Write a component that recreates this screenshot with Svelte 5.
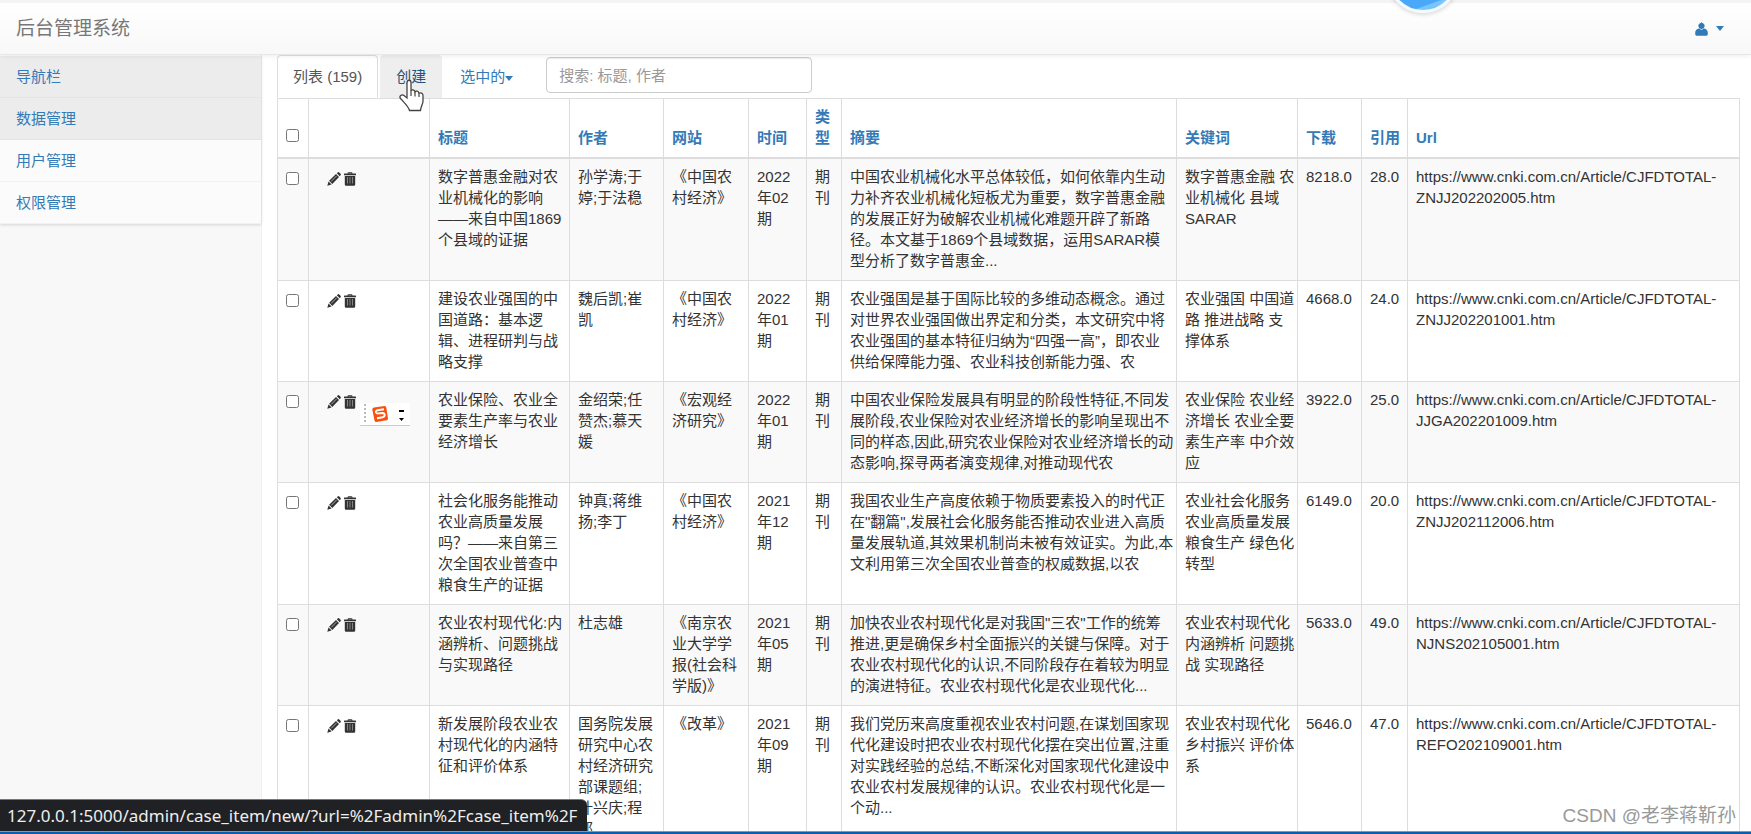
<script lang='ts'>

    const menu = [
        { name: '导航栏', active: true },
        { name: '数据管理', active: true },
        { name: '用户管理', active: false },
        { name: '权限管理', active: false },
    ];

    const columns = [
        { key: 'title', label: '标题' },
        { key: 'author', label: '作者' },
        { key: 'site', label: '网站' },
        { key: 'time', label: '时间' },
        { key: 'type', label: '类型' },
        { key: 'summary', label: '摘要' },
        { key: 'keyword', label: '关键词' },
        { key: 'download', label: '下载' },
        { key: 'cite', label: '引用' },
        { key: 'url', label: 'Url' },
    ];

    const base = 'https://www.cnki.com.cn/Article/CJFDTOTAL-';

    const rows: Record<string, string>[] = [
        {
            title: '数字普惠金融对农业机械化的影响——来自中国1869个县域的证据',
            author: '孙学涛;于婷;于法稳',
            site: '《中国农村经济》',
            time: '2022年02期',
            type: '期刊',
            summary: '中国农业机械化水平总体较低，如何依靠内生动力补齐农业机械化短板尤为重要，数字普惠金融的发展正好为破解农业机械化难题开辟了新路径。本文基于1869个县域数据，运用SARAR模型分析了数字普惠金...',
            keyword: '数字普惠金融 农业机械化 县域 SARAR',
            download: '8218.0',
            cite: '28.0',
            url: base + 'ZNJJ202202005.htm',
        },
        {
            title: '建设农业强国的中国道路：基本逻辑、进程研判与战略支撑',
            author: '魏后凯;崔凯',
            site: '《中国农村经济》',
            time: '2022年01期',
            type: '期刊',
            summary: '农业强国是基于国际比较的多维动态概念。通过对世界农业强国做出界定和分类，本文研究中将农业强国的基本特征归纳为“四强一高”，即农业供给保障能力强、农业科技创新能力强、农',
            keyword: '农业强国 中国道路 推进战略 支撑体系',
            download: '4668.0',
            cite: '24.0',
            url: base + 'ZNJJ202201001.htm',
        },
        {
            title: '农业保险、农业全要素生产率与农业经济增长',
            author: '金绍荣;任赞杰;慕天媛',
            site: '《宏观经济研究》',
            time: '2022年01期',
            type: '期刊',
            summary: '中国农业保险发展具有明显的阶段性特征,不同发展阶段,农业保险对农业经济增长的影响呈现出不同的样态,因此,研究农业保险对农业经济增长的动态影响,探寻两者演变规律,对推动现代农',
            keyword: '农业保险 农业经济增长 农业全要素生产率 中介效应',
            download: '3922.0',
            cite: '25.0',
            url: base + 'JJGA202201009.htm',
        },
        {
            title: '社会化服务能推动农业高质量发展吗？——来自第三次全国农业普查中粮食生产的证据',
            author: '钟真;蒋维扬;李丁',
            site: '《中国农村经济》',
            time: '2021年12期',
            type: '期刊',
            summary: '我国农业生产高度依赖于物质要素投入的时代正在"翻篇",发展社会化服务能否推动农业进入高质量发展轨道,其效果机制尚未被有效证实。为此,本文利用第三次全国农业普查的权威数据,以农',
            keyword: '农业社会化服务 农业高质量发展 粮食生产 绿色化转型',
            download: '6149.0',
            cite: '20.0',
            url: base + 'ZNJJ202112006.htm',
        },
        {
            title: '农业农村现代化:内涵辨析、问题挑战与实现路径',
            author: '杜志雄',
            site: '《南京农业大学学报(社会科学版)》',
            time: '2021年05期',
            type: '期刊',
            summary: '加快农业农村现代化是对我国"三农"工作的统筹推进,更是确保乡村全面振兴的关键与保障。对于农业农村现代化的认识,不同阶段存在着较为明显的演进特征。农业农村现代化是农业现代化...',
            keyword: '农业农村现代化 内涵辨析 问题挑战 实现路径',
            download: '5633.0',
            cite: '49.0',
            url: base + 'NJNS202105001.htm',
        },
        {
            title: '新发展阶段农业农村现代化的内涵特征和评价体系',
            author: '国务院发展研究中心农村经济研究部课题组;叶兴庆;程郁',
            site: '《改革》',
            time: '2021年09期',
            type: '期刊',
            summary: '我们党历来高度重视农业农村问题,在谋划国家现代化建设时把农业农村现代化摆在突出位置,注重对实践经验的总结,不断深化对国家现代化建设中农业农村发展规律的认识。农业农村现代化是一个动...',
            keyword: '农业农村现代化 乡村振兴 评价体系',
            download: '5646.0',
            cite: '47.0',
            url: base + 'REFO202109001.htm',
        },
    ];

    let search = '';
    let selected = rows.map(() => false);

    $: allSelected = selected.every(Boolean);

    const toggleAll = () => {
        const next = !allSelected;
        selected = selected.map(() => next);
    }

</script>

<div class='page'>

    <header class='navbar'>
        <a class='brand' href='#home'>后台管理系统</a>
        <button class='user' aria-label='账户'>
            <svg width='13' height='14' viewBox='0 0 13 14'>
                <path d='M6.500 0 7.300.900C9 1.300 9.800 2.500 9.600 3.900 9.500 5 8.900 5.900 8.200 6.400H9C11.500 6.600 12.800 8.500 12.800 11V12.300Q12.800 13.700 11.400 13.700H1.600Q.200 13.700.200 12.300V11C.200 8.500 1.500 6.600 4 6.400H4.800C4.100 5.900 3.500 5 3.400 3.900 3.200 2.500 4 1.300 5.700.900Z'/>
                <path d='M4.800 6.300 6.500 8 8.200 6.300' fill='none' stroke='#fbfbfb' stroke-width='.8'/>
            </svg>
            <span class='caret'></span>
        </button>
    </header>

    <div class='body'>

        <nav class='sidebar'>
            <ul class='menu'>
                {#each menu as item}
                    <li><a href='#menu' class:active={item.active}>{item.name}</a></li>
                {/each}
            </ul>
        </nav>

        <main class='content'>

            <div class='tabs'>
                <a class='tab current' href='#list'>列表 (159)</a>
                <a class='tab hover' href='#new'>
                    创建
                    <svg class='cursor' width='25' height='33' viewBox='0 0 25 33'>
                        <path d='M8 19V3.500C8 .500 12 .500 12 3.500V12C12.500 10.500 15.500 10.500 16 12.800 17 11.500 19.500 12 20 14.300 21.500 13.300 24 14 24 16.500V22C24 25 22 27 21.500 31.500H10.500C9.500 27.500 5 23.500 1.500 19.500-.500 17 3 14.800 5 16.600Z' fill='#fff' stroke='#444' stroke-width='1.300'/>
                        <path d='M12 12V17M16 13V17.500M20 14.500V18' fill='none' stroke='#444' stroke-width='1.200'/>
                    </svg>
                </a>
                <button class='tab'>选中的<span class='caret'></span></button>
                <input class='search' type='text' aria-label='搜索' placeholder='搜索: 标题, 作者' bind:value={search}/>
            </div>

            <table>
                <colgroup>
                    <col class='w-check'/>
                    <col class='w-action'/>
                    {#each columns as column}
                        <col class='w-{column.key}'/>
                    {/each}
                </colgroup>
                <thead>
                    <tr>
                        <th class='check'><input type='checkbox' aria-label='全选' checked={allSelected} on:change={toggleAll}/></th>
                        <th></th>
                        {#each columns as column}
                            <th class={column.key}><a href='#sort'>{column.label}</a></th>
                        {/each}
                    </tr>
                </thead>
                <tbody>
                    {#each rows as row, i}
                        <tr>
                            <td class='check'><input type='checkbox' aria-label='选择' bind:checked={selected[i]}/></td>
                            <td>
                                <div class='actions'>
                                    <button aria-label='编辑'>
                                        <svg width='14' height='14' viewBox='0 0 14 14'>
                                            <path d='M9.800 1.200 10.700.400Q11.500-.200 12.300.500L13.500 1.700Q14.200 2.500 13.600 3.300L12.800 4.200ZM9 2 12 5 5.300 11.900 2.100 8.700ZM1.500 9.400 4.600 12.500.300 13.700Z'/>
                                            <path d='M4.200 9.400 9.700 3.800' stroke='#f9f9f9' stroke-width='.6'/>
                                        </svg>
                                    </button>
                                    <button aria-label='删除'>
                                        <svg width='14' height='14' viewBox='0 0 14 14'>
                                            <path d='M4.500 1.500Q4.500.300 5.700.300H8.300Q9.500.300 9.500 1.500H12.500Q13 1.500 13 2V3.300H1V2Q1 1.500 1.500 1.500ZM5.500 1.500H8.500V1.200H5.500ZM1.800 4H12.200V12.500Q12.200 13.800 11 13.800H3Q1.800 13.800 1.800 12.500Z'/>
                                            <path d='M4.500 5V11.500M7 5V11.500M9.500 5V11.500' stroke='#999' stroke-width='.8'/>
                                        </svg>
                                    </button>
                                </div>
                            </td>
                            {#each columns as column}
                                <td class={column.key}>{row[column.key]}</td>
                            {/each}
                        </tr>
                    {/each}
                </tbody>
            </table>

        </main>

    </div>

    <div class='bubble'></div>

    <div class='ime'>
        <svg width='50' height='22' viewBox='0 0 50 22'>
            <path d='M5 1V21' stroke='#bbb' stroke-width='2' stroke-dasharray='2 2'/>
            <path d='M14 4.500 24.500 3Q26 3 26.300 4.500L28 15.500Q28 17 26.700 17.300L16.500 19Q14.800 19 14.500 17.500L12.300 6.500Q12.300 5 14 4.500Z' fill='#f9500f'/>
            <path d='M24 6.300 17.500 7.200Q15.500 7.800 16 9.300 16.500 10.600 18.500 10.400L22.500 10Q24.500 10 24.700 11.800 24.700 13.800 22.700 14.300L17 15.300' fill='none' stroke='#fff' stroke-width='1.900'/>
            <path d='M39 7H44V9H39ZM39 15H44L41.500 18Z' fill='#000'/>
        </svg>
    </div>

    <div class='watermark'>CSDN @老李蒋靳孙</div>
    <div class='status'>127.0.0.1:5000/admin/case_item/new/?url=%2Fadmin%2Fcase_item%2F</div>
    <div class='taskbar'></div>

</div>

<style>

    :global(body) {
        overflow: hidden;
    }

    .page {
        position: relative;
        display: flex;
        flex-direction: column;
        height: 100vh;
        overflow: hidden;
        box-sizing: border-box;
        background-color: #fff;
        color: #333;
        font-family: 'Liberation Sans', 'Noto Sans CJK SC', sans-serif;
        font-size: 15px;
        line-height: 21px;
    }

    a {
        color: #337ab7;
        text-decoration: none;
    }

    button {
        border: 0;
        padding: 0;
        background: none;
        font: inherit;
        color: #337ab7;
        cursor: pointer;
    }

    svg {
        display: block;
    }

    .navbar {
        position: relative;
        z-index: 1;
        flex: none;
        display: flex;
        align-items: center;
        justify-content: space-between;
        height: 51px;
        padding: 0 27px 0 16px;
        border-top: 3px solid #f4f4f4;
        border-bottom: 1px solid #e7e7e7;
        background: linear-gradient(#fff, #f8f8f8);
        box-shadow: 0 1px 5px rgba(0, 0, 0, 0.075);
    }

    .brand {
        font-size: 19px;
        color: #777;
    }

    .user {
        display: flex;
        align-items: center;
        gap: 8px;
    }

    .user svg {
        fill: #337ab7;
    }

    .caret {
        display: inline-block;
        vertical-align: middle;
        border-top: 5px solid;
        border-left: 4px solid transparent;
        border-right: 4px solid transparent;
    }

    .body {
        flex: 1;
        min-height: 0;
        display: flex;
    }

    .sidebar {
        flex: none;
        width: 15%;
        max-width: 261px;
        background-color: #f8f8f8;
        border-right: 1px solid #f0f0f0;
    }

    .menu {
        margin: 0;
        padding: 1px 0 0;
        list-style: none;
        background-color: #fbfbfb;
        box-shadow: 0 1px 3px rgba(0, 0, 0, 0.15);
    }

    .menu a {
        display: block;
        padding: 10px 16px;
        border-bottom: 1px solid #f1f1f1;
    }

    .menu a.active {
        background-color: #ececec;
        border-bottom-color: #e5e5e5;
    }

    .content {
        flex: 1;
        min-width: 0;
        padding: 0 11px 0 15px;
    }

    .tabs {
        display: flex;
        align-items: flex-start;
        gap: 2px;
        height: 43px;
    }

    .tab {
        position: relative;
        box-sizing: border-box;
        height: 43px;
        padding: 10px 15px;
        border: 1px solid transparent;
        border-radius: 4px 4px 0 0;
        white-space: nowrap;
    }

    .tab.current {
        border-color: #ddd;
        border-bottom-color: #fff;
        color: #555;
    }

    .tab.hover {
        background-color: #eee;
        color: #23527c;
    }

    .cursor {
        position: absolute;
        left: 18px;
        top: 23px;
    }

    .search {
        box-sizing: border-box;
        width: 266px;
        height: 36px;
        margin: 2px 0 0 15px;
        padding: 6px 12px;
        border: 1px solid #ccc;
        border-radius: 4px;
        box-shadow: inset 0 1px 1px rgba(0, 0, 0, 0.075);
        font: inherit;
        color: #555;
    }

    .search::placeholder {
        color: #999;
    }

    table {
        width: 100%;
        table-layout: fixed;
        border-collapse: collapse;
    }

    th,
    td {
        padding: 7px 8px 9px;
        border: 1px solid #ddd;
        text-align: left;
        vertical-align: top;
    }

    th {
        border-bottom-width: 2px;
        vertical-align: bottom;
    }

    tbody tr:nth-child(odd) {
        background-color: #f9f9f9;
    }

    /* long texts may run closer to the border */
    .title,
    .summary,
    .keyword {
        padding-right: 2px;
    }

    .cite {
        white-space: nowrap;
    }

    .check input {
        display: block;
        width: 13px;
        height: 13px;
        margin: 6px 0;
    }

    .actions {
        display: flex;
        gap: 2px;
        padding: 6px 10px;
    }

    .actions svg {
        fill: #333;
    }

    .w-check { width: 31px; }
    .w-action { width: 121px; }
    .w-title { width: 140px; }
    .w-author { width: 94px; }
    .w-site { width: 85px; }
    .w-time { width: 58px; }
    .w-type { width: 35px; }
    .w-summary { width: 335px; }
    .w-keyword { width: 121px; }
    .w-download { width: 64px; }
    .w-cite { width: 46px; }

    .bubble {
        position: absolute;
        z-index: 2;
        top: -59px;
        right: 292px;
        width: 66px;
        height: 66px;
        border: 3px solid #f4faff;
        border-radius: 50%;
        background: linear-gradient(160deg, #4aa8fa 82%, #7cc8fd 84%, #55b2fb);
        box-shadow: 0 1px 5px rgba(0, 0, 0, 0.2);
    }

    .ime {
        position: absolute;
        left: 360px;
        top: 403px;
        border-bottom: 1px solid #ccc;
        background-color: #fff;
    }

    .watermark {
        position: absolute;
        right: 15px;
        bottom: 8px;
        font-size: 19px;
        color: #999;
        text-shadow: 1px 1px 0 #fff;
    }

    .status {
        position: absolute;
        left: 0;
        bottom: 3px;
        padding: 5px 10px 5px 7px;
        border-top: 1px solid #777;
        border-radius: 0 6px 0 0;
        background-color: #202124;
        color: #eee;
        font-family: 'Noto Sans', sans-serif;
        font-size: 17px;
    }

    .taskbar {
        position: absolute;
        left: 0;
        right: 0;
        bottom: 0;
        height: 2px;
        border-top: 1px solid #6f9cc4;
        background-color: #0a5cad;
    }

</style>
